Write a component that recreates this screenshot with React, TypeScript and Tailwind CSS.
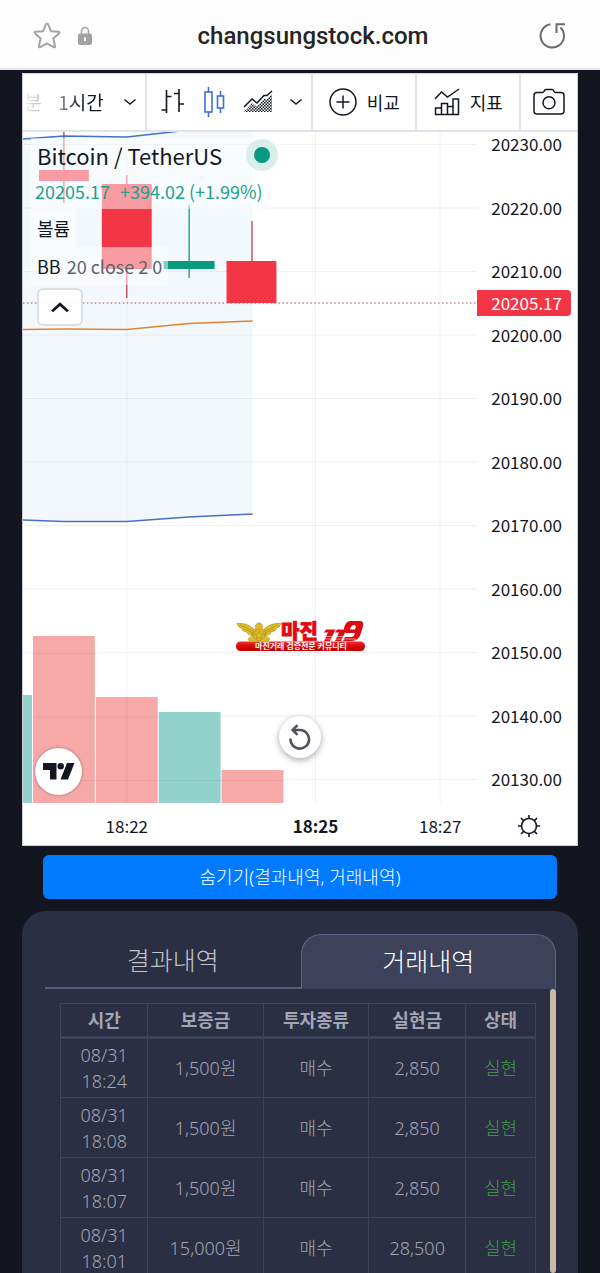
import React from "react";

const prices = [
  "20230.00",
  "20220.00",
  "20210.00",
  "20200.00",
  "20190.00",
  "20180.00",
  "20170.00",
  "20160.00",
  "20150.00",
  "20140.00",
  "20130.00",
];

interface Trade {
  date: string;
  time: string;
  deposit: string;
  type: string;
  realized: string;
  status: string;
}

const trades: Trade[] = [
  { date: "08/31", time: "18:24", deposit: "1,500원", type: "매수", realized: "2,850", status: "실현" },
  { date: "08/31", time: "18:08", deposit: "1,500원", type: "매수", realized: "2,850", status: "실현" },
  { date: "08/31", time: "18:07", deposit: "1,500원", type: "매수", realized: "2,850", status: "실현" },
  { date: "08/31", time: "18:01", deposit: "15,000원", type: "매수", realized: "28,500", status: "실현" },
];

const Chevron: React.FC<{ up?: boolean }> = ({ up }) => (
  <svg width={up ? 20 : 14} height={up ? 12 : 8} viewBox="0 0 14 8" fill="none" stroke="currentColor" strokeWidth={up ? 1.9 : 1.5}>
    <path d={up ? "M1.500 7 7 2l5.500 5" : "M1.500 1.500 7 6l5.500-4.500"} />
  </svg>
);

const AddressBar: React.FC = () => (
  <header className="flex h-[70px] shrink-0 items-center border-b-2 border-[#e4e5e9] bg-[#fdfdfd] px-8 pt-1 font-[Roboto,sans-serif]">
    <div className="flex w-24 items-center gap-4">
      <button aria-label="즐겨찾기" className="shrink-0">
        <svg width="30" height="30" viewBox="0 0 30 30" fill="none" stroke="#a3a3a3" strokeWidth="2" strokeLinejoin="round">
          <path d="M15 2.500q.8 0 1.200 1l2.700 6.700 7.600.6q1.700.3.500 1.600l-5.700 5 1.800 7.800q.2 1.700-1.300.9L15 22.300l-6.800 3.800q-1.500.8-1.300-.9l1.800-7.800-5.700-5q-1.200-1.300.5-1.600l7.600-.6 2.700-6.700q.4-1 1.200-1z" />
        </svg>
      </button>
      <svg className="shrink-0" width="14" height="20" viewBox="0 0 14 20">
        <path d="M3.500 8V5a3.500 3.500 0 0 1 7 0V8" fill="none" stroke="#a3a3a3" strokeWidth="1.500" />
        <rect x="0" y="7.500" width="14" height="11.500" rx="2" fill="#a3a3a3" />
        <path d="M7 11.500v3.500" stroke="#fff" strokeWidth="2" />
      </svg>
    </div>
    <div className="flex-1 text-center text-[24px] font-medium text-[#252525]">changsungstock.com</div>
    <div className="flex w-[70px] justify-end">
      <button aria-label="새로고침">
        <svg width="30" height="28" viewBox="0 0 30 28" fill="none" stroke="#6b6b6b" strokeWidth="2">
          <path d="M12.500 2.300a11.700 11.700 0 1 0 10 3.200" />
          <path d="M18.500 11V2.300H27" />
        </svg>
      </button>
    </div>
  </header>
);

const Toolbar: React.FC = () => (
  <div className="grid h-[58px] grid-cols-[124fr_167fr_104fr_104fr_56fr] border-b-2 border-[#e0e3eb] text-lg text-[#131722]">
    <div className="flex items-center justify-between border-r-2 border-[#e0e3eb] pr-2">
      <button className="w-5 bg-gradient-to-r from-[#f4f4f5] to-[#b5b7bd] bg-clip-text text-[19px] text-transparent">분</button>
      <button className="bg-gradient-to-r from-[#9598a1] to-[#131722] to-50% bg-clip-text pr-1 text-[19px] text-transparent">1시간</button>
      <button aria-label="시간 간격">
        <Chevron />
      </button>
    </div>
    <div className="flex items-center justify-between border-r-2 border-[#e0e3eb] pr-2 pl-3">
      <button aria-label="바">
        <svg width="26" height="26" viewBox="0 0 26 26" fill="none" stroke="#131722" strokeWidth="1.600">
          <path d="M7.500 1v23M2.500 21h5M7.500 7.500h5M20 0v23M15 4.500h5M20 15h5" />
        </svg>
      </button>
      <button aria-label="캔들">
        <svg width="24" height="30" viewBox="0 0 24 30" fill="none" stroke="#3f6fd8" strokeWidth="1.600">
          <path d="M6.500 0v5M6.500 25v5M18.500 4v5M18.500 21v5" />
          <rect x="3" y="5" width="7" height="20" />
          <rect x="15.500" y="9" width="6" height="12" />
        </svg>
      </button>
      <button aria-label="영역">
        <svg width="30" height="24" viewBox="0 0 30 24" fill="none">
          <defs>
            <pattern id="dots" width="3" height="3" patternUnits="userSpaceOnUse">
              <path d="M0 0h1.500v1.500H0zM1.500 1.500H3V3H1.500z" fill="#131722" />
            </pattern>
          </defs>
          <path d="M1 22l8-9 5 3.500 7-7.500h3l5-4.500V22z" fill="url(#dots)" />
          <path d="M1 17l8-8 5 4 7-7.500h3L29 1" stroke="#131722" strokeWidth="1.500" />
        </svg>
      </button>
      <button aria-label="차트 유형">
        <Chevron />
      </button>
    </div>
    <button className="flex items-center justify-center gap-2.5 border-r-2 border-[#e0e3eb]">
      <svg width="28" height="28" viewBox="0 0 28 28" fill="none" stroke="#131722" strokeWidth="1.500">
        <circle cx="14" cy="14" r="13" />
        <path d="M14 7.500v13M7.500 14h13" />
      </svg>
      비교
    </button>
    <button className="flex items-center justify-center gap-2.5 border-r-2 border-[#e0e3eb]">
      <svg width="26" height="28" viewBox="0 0 26 28" fill="none" stroke="#131722" strokeWidth="1.500">
        <path d="M1 11l6.500-7 6 5L25 1" />
        <path d="M1.500 26.500v-6.500h6v6.500M7.500 20v-4.500h6v11M13.500 18.500h5.500v8M19 18.500v-7.500h5.500v15.500M1 26.500h24" />
      </svg>
      지표
    </button>
    <button aria-label="스냅샷" className="flex items-center justify-center">
      <svg width="32" height="28" viewBox="0 0 32 28" fill="none" stroke="#131722" strokeWidth="1.500">
        <path d="M4 4.500h5.500q1 0 1.500-1l.7-1.300q.4-.8 1.500-.8h5.600q1.100 0 1.500.8l.7 1.300q.5 1 1.500 1H28q3 0 3 3V23q0 3-3 3H4q-3 0-3-3V7.500q0-3 3-3z" />
        <circle cx="16" cy="14.800" r="6" />
      </svg>
    </button>
  </div>
);

// candles, Bollinger band and volume of the plot area
const Plot: React.FC = () => (
  <svg className="block h-[671px] w-full" viewBox="0 0 455 671" preserveAspectRatio="none" fill="none">
    <path d="M0 7 41 4l63 1 63-7h63v384l-64 3-62 4H41L0 388z" fill="#f3f8fd" />
    <g stroke="#2a2e39" strokeOpacity="0.07">
      {prices.map((p, i) => (
        <path key={p} d={`M0 ${12.5 + i * 63.5}H455`} />
      ))}
      <path d="M104 0V671M293 0V671M418 0V671" />
    </g>
    <g fill="#f7a9a7">
      <rect x="10" y="504" width="62" height="167" />
      <rect x="73" y="565" width="62" height="106" />
      <rect x="199" y="638" width="62" height="33" />
    </g>
    <g fill="#92d2cc">
      <rect x="0" y="563" width="9" height="108" />
      <rect x="136" y="580" width="62" height="91" />
    </g>
    <path d="M104 565V671M136 648.500H261M10 521.500H72M10 585H72M73 585H135M10 648.500H135" stroke="#2a2e39" strokeOpacity="0.07" />
    <path d="M0 171H455" stroke="#b84050" strokeDasharray="1.500 2.500" />
    <path d="M41 0v71M104 43v123M229.500 89v41" stroke="#c83b4c" strokeWidth="1.300" />
    <path d="M166.500 73v73" stroke="#089981" strokeWidth="1.300" />
    <g fill="#f23645">
      <rect x="16" y="38" width="50" height="11" />
      <rect x="79" y="52" width="50" height="85" />
      <rect x="204" y="129" width="50" height="42" />
    </g>
    <rect x="141" y="129" width="51" height="8" fill="#089981" />
    <path d="M0 7 41 4l63 1 63-7M0 388l41 1.500h63l62-4.500 64-3" stroke="#4370c8" strokeWidth="1.500" />
    <path d="M0 197.500l41-.5 63 .5 62-6 64-2.500" stroke="#df8434" strokeWidth="1.600" />
  </svg>
);

const Legend: React.FC = () => (
  <div className="absolute top-1.5 left-2 flex flex-col items-start text-lg text-[#131722]">
    <div className="flex h-[34px] items-center gap-6 bg-white/50 pl-1.5 text-[22px]">
      <span>Bitcoin / TetherUS</span>
      <span className="flex size-8 items-center justify-center rounded-full bg-[#d9efec]">
        <span className="size-4 rounded-full bg-[#089981]" />
      </span>
    </div>
    <div className="flex h-[37px] items-center gap-2.5 bg-white/50 px-1 text-[#22a18c]">
      <span>20205.17</span>
      <span>+394.02 (+1.99%)</span>
    </div>
    <div className="flex h-[38px] items-center bg-white/50 px-1.5">볼륨</div>
    <div className="flex h-[38px] items-center gap-1.5 bg-white/50 px-1.5">
      <span>BB</span>
      <span className="text-[#5f626b]">20 close 2 0</span>
    </div>
    <button
      aria-label="레전드 접기"
      className="mt-[3px] ml-1.5 flex h-[38px] w-[46px] items-center justify-center rounded-md border-2 border-[#dcdfe6] bg-white/90"
    >
      <Chevron up />
    </button>
  </div>
);

const MarginLogo: React.FC = () => (
  <svg className="absolute top-[489px] left-[213px] overflow-visible" width="132" height="33" viewBox="0 0 132 33">
    <defs>
      <linearGradient id="ribbon" x1="0" y1="0" x2="0" y2="1">
        <stop offset="0" stopColor="#f03030" />
        <stop offset="0.5" stopColor="#d80808" />
        <stop offset="1" stopColor="#b80000" />
      </linearGradient>
    </defs>
    <rect x="0" y="20.500" width="129" height="9.500" rx="4.500" fill="url(#ribbon)" />
    <g fill="#dcbc28" stroke="#9c8218" strokeWidth="0.5">
      <path d="M18 8Q11 1.500 1 2.500q1 4 5 5 0 3 5 3.500 0 3 6 3.500zM28 8Q35 1.500 45 2.500q-1 4-5 5 0 3-5 3.500 0 3-6 3.500z" />
      <path d="M14 21l-2-3 4-3 1-5 3-3-1-2 2-2.500q2-1.500 4 0L27 5l-1 2 3 3 1 5 4 3-2 3z" />
      <circle cx="23" cy="14" r="5.500" />
      <path d="M23 10l1.300 2.700 3 .3-2.200 2 .6 3-2.700-1.500-2.700 1.500.6-3-2.200-2 3-.3z" />
      <path d="M4 4l13 6M8 8l9 4M42 4l-13 6M38 8l-9 4" />
    </g>
    <text x="45" y="18" fill="#e00b12" stroke="#e00b12" strokeWidth="0.8" fontSize="20" fontWeight="900" fontFamily="'Noto Sans CJK KR', sans-serif">
      마진
    </text>
    <g fill="#df0b12">
      <path d="M90 8.500h9.500L94 20h-6l4-8.500h-4zM101 8.500h9.500L105 20h-6l4-8.500h-4z" />
      <path
        d="M114 0h10q4 0 3 5l-2 7q-2 8-10 8h-8l2-4h6q3 0 4-4h-8q-4 0-3-5 2-7 6-7zm4 4q-3 0-4 4.500h5q2-4.500-1-4.500z"
        fillRule="evenodd"
      />
    </g>
    <path d="M86 15.500h22M84 18h36" stroke="#fff" strokeWidth="0.500" />
    <text x="65" y="28" textAnchor="middle" fill="#fff" fontSize="8" fontWeight="700" fontFamily="'Noto Sans CJK KR', sans-serif">
      마진거래 검증전문 커뮤니티
    </text>
  </svg>
);

const Chart: React.FC = () => (
  <section className="mx-[22px] mt-[3px] shrink-0 border border-[#cdd0d9] bg-white font-['Noto_Sans_CJK_KR',sans-serif] leading-6">
    <Toolbar />
    <div className="flex">
      <div className="relative min-w-0 flex-1 overflow-hidden">
        <Plot />
        <Legend />
        <MarginLogo />
        <div className="absolute bottom-2 left-3 flex size-[47px] items-center justify-center rounded-full bg-white shadow-[0_0_3px_rgba(0,0,0,0.4)]">
          <svg width="32" height="17" viewBox="0 0 32 17" fill="#131722">
            <path d="M0 0h13.500v16.500H7V7H0zM25 16.500h-7.500L24 0H31.500z" />
            <circle cx="17.700" cy="3.200" r="3.200" />
          </svg>
        </div>
        <button
          aria-label="차트 재설정"
          className="absolute bottom-[45px] left-[256px] flex size-[42px] items-center justify-center rounded-full bg-white shadow-[0_2px_6px_rgba(0,0,0,0.35)]"
        >
          <svg width="24" height="26" viewBox="0 0 24 26" fill="none" stroke="#50535e" strokeWidth="2.600">
            <path d="M2.500 14.500a9.300 9.300 0 1 0 9.300-8.500H5" />
            <path d="M9.500 1.200 4.700 6l4.800 4.800" />
          </svg>
        </button>
      </div>
      <div className="relative flex w-[100px] flex-col justify-between pb-3 pr-[15px] text-right text-[17px] text-[#131722]">
        {prices.map((p) => (
          <span key={p}>{p}</span>
        ))}
        <span className="absolute top-[158px] left-0 w-[94px] rounded-r-sm bg-[#f23645] pr-[9px] leading-[26px] text-white">20205.17</span>
      </div>
    </div>
    <div className="grid h-[42px] grid-cols-[208fr_170fr_80fr_97fr] items-center justify-items-center pt-1 text-[17px] text-[#131722]">
      <span>18:22</span>
      <span className="font-bold">18:25</span>
      <span>18:27</span>
      <button aria-label="설정">
        <svg width="24" height="24" viewBox="0 0 24 24" fill="none" stroke="#131722" strokeWidth="1.600">
          <circle cx="12" cy="12" r="7.500" />
          <path d="M12 1v3.500M12 19.500V23M1 12h3.500M19.500 12H23M4 4l2.600 2.600M17.400 17.400 20 20M4 20l2.600-2.600M17.400 6.600 20 4" />
        </svg>
      </button>
    </div>
  </section>
);

const headers = ["시간", "보증금", "투자종류", "실현금", "상태"];
const cell = "border border-[#3d445a] p-0 text-center";

const History: React.FC = () => (
  <section className="mx-[22px] mt-3 flex min-h-0 flex-1 flex-col overflow-hidden rounded-t-3xl bg-[#2b2f43] pt-[23px] pr-[22px] pl-[23px]">
    <div role="tablist" className="grid h-[55px] shrink-0 grid-cols-2 text-[25px] font-light">
      <button role="tab" aria-selected={false} className="border-b-2 border-[#545e7d] text-[#c3c3c7]">
        결과내역
      </button>
      <button role="tab" aria-selected className="rounded-t-[20px] border border-b-0 border-[#5b6788] bg-[#3b4259] text-white">
        거래내역
      </button>
    </div>
    <div className="flex min-h-0 flex-1 justify-between overflow-hidden">
      <div className="flex-1 pt-3.5 pr-3.5 pl-[15px]">
        <table className="w-full table-fixed border-collapse text-lg leading-[26px] text-[#a2a6b4]">
          <colgroup>
            <col className="w-[18.4%]" />
            <col className="w-[24.3%]" />
            <col className="w-[22.2%]" />
            <col className="w-[20.4%]" />
            <col className="w-[14.7%]" />
          </colgroup>
          <thead>
            <tr className="h-[34px]">
              {headers.map((h) => (
                <th key={h} className={`${cell} border-b-3 font-bold`}>
                  {h}
                </th>
              ))}
            </tr>
          </thead>
          <tbody className="font-light">
            {trades.map((t) => (
              <tr key={t.time} className="h-[60px]">
                <td className={cell}>
                  {t.date}
                  <br />
                  {t.time}
                </td>
                <td className={cell}>{t.deposit}</td>
                <td className={cell}>{t.type}</td>
                <td className={cell}>{t.realized}</td>
                <td className={`${cell} text-[#449d4c]`}>{t.status}</td>
              </tr>
            ))}
          </tbody>
        </table>
      </div>
      <div className="w-1.5 shrink-0 rounded-full bg-[#c9baa6]" />
    </div>
  </section>
);

export default function App() {
  return (
    <div className="flex h-screen flex-col overflow-hidden bg-[#131521] font-['Noto_Sans','Noto_Sans_CJK_KR',sans-serif]">
      <AddressBar />
      <Chart />
      <button className="mx-[43px] mt-[9px] h-[44px] shrink-0 rounded-md bg-[#007bff] text-lg font-light text-white">
        숨기기(결과내역, 거래내역)
      </button>
      <History />
    </div>
  );
}
